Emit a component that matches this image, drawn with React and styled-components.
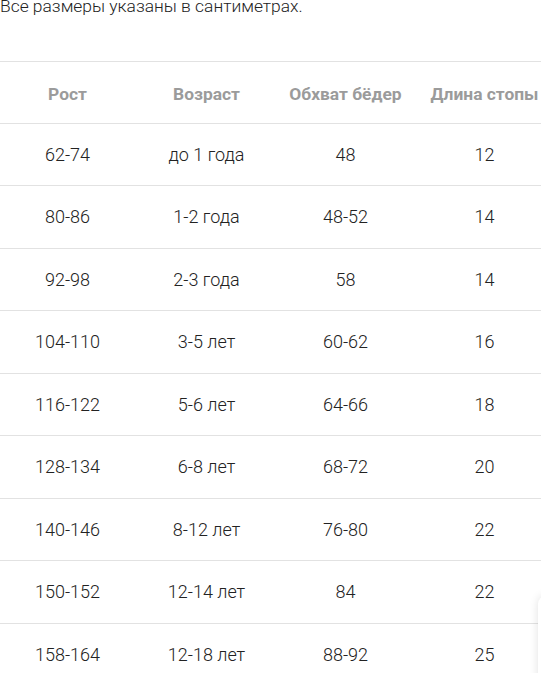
import styled, { createGlobalStyle } from "styled-components";

const GlobalStyle = createGlobalStyle`
  html, body {
    margin: 0;
    padding: 0;
    background: #fff;
    overflow: hidden;
  }
  body {
    font-family: Roboto, "Noto Sans", sans-serif;
    color: #222;
  }
`;

const rows = [
  ["62-74", "до 1 года", "48", "12"],
  ["80-86", "1-2 года", "48-52", "14"],
  ["92-98", "2-3 года", "58", "14"],
  ["104-110", "3-5 лет", "60-62", "16"],
  ["116-122", "5-6 лет", "64-66", "18"],
  ["128-134", "6-8 лет", "68-72", "20"],
  ["140-146", "8-12 лет", "76-80", "22"],
  ["150-152", "12-14 лет", "84", "22"],
  ["158-164", "12-18 лет", "88-92", "25"],
];

const headers = ["Рост", "Возраст", "Обхват бёдер", "Длина стопы"];

const App = () => {
  return (
    <>
      <GlobalStyle />
      <Page>
        <Intro>Все размеры указаны в сантиметрах.</Intro>
        <Table>
          <thead>
            <tr>
              {headers.map((h) => (
                <Th key={h}>{h}</Th>
              ))}
            </tr>
          </thead>
          <tbody>
            {rows.map((r, i) => (
              <tr key={i}>
                {r.map((c, j) => (
                  <Td key={j}>{c}</Td>
                ))}
              </tr>
            ))}
          </tbody>
        </Table>
        <FloatCard />
      </Page>
    </>
  );
};

export default App;

const Page = styled.div`
  position: relative;
  width: 541px;
  height: 673px;
  overflow: hidden;
`;

const Intro = styled.p`
  margin: -6px 0 0;
  font-size: 17.4px;
  font-weight: 300;
  line-height: 25px;
  color: #222;
`;

const Table = styled.table`
  margin: 42px 0 0 -2px;
  border-collapse: collapse;
  table-layout: fixed;
  width: 556px;
  border-top: 1px solid #e2e2e2;
`;

const Th = styled.th`
  box-sizing: border-box;
  width: 139px;
  height: 61.5px;
  padding: 3px 0 0;
  font-size: 17.4px;
  font-weight: 700;
  color: #9b9b9b;
  text-align: center;
  white-space: nowrap;
  border-bottom: 1px solid #e2e2e2;
`;

const Td = styled.td`
  height: 61.5px;
  padding: 0;
  font-size: 18px;
  font-weight: 300;
  color: #222;
  text-align: center;
  border-bottom: 1px solid #e2e2e2;
`;

const FloatCard = styled.div`
  position: absolute;
  left: 538px;
  top: 596px;
  width: 60px;
  height: 120px;
  background: #fff;
  border-radius: 8px;
  box-shadow: 0 0 10px rgba(0, 0, 0, 0.12);
`;
